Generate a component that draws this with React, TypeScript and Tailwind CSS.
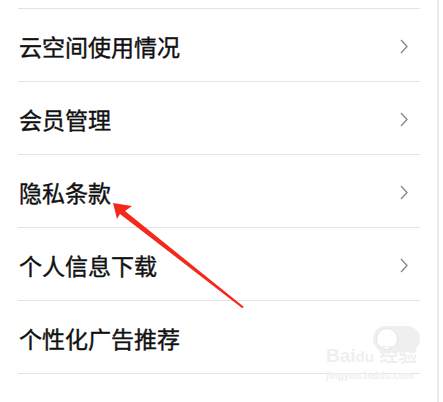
const rows = [
  { label: '云空间使用情况', kind: 'link' },
  { label: '会员管理', kind: 'link' },
  { label: '隐私条款', kind: 'link' },
  { label: '个人信息下载', kind: 'link' },
  { label: '个性化广告推荐', kind: 'toggle' },
];

const Chevron = () => (
  <svg className="mr-[12px]" width="8" height="15" viewBox="0 0 8 15" fill="none">
    <polyline points="1,1 7,7.5 1,14" stroke="#8a8a8a" strokeWidth="1.4" />
  </svg>
);

const Toggle = () => (
  <span className="relative flex h-[26px] w-[47px] items-center rounded-full bg-[#efefef]">
    <span className="ml-[3px] h-[22px] w-[22px] rounded-full border border-[#e6e6e6] bg-white" />
  </span>
);

const App = () => {
  return (
    <div
      className="relative h-[402px] w-[443px] overflow-hidden bg-white"
      style={{ fontFamily: '"Noto Sans CJK SC", "Noto Sans", sans-serif' }}
    >
      <div className="h-[402px] w-[439px] border-r-2 border-[#ebebeb]">
        <div className="h-2" />
        <ul className="ml-[18px] w-[402px] border-b border-[#e3e3e3]">
          {rows.map((row) => (
            <li
              key={row.label}
              className="flex h-[73px] items-center justify-between border-t border-[#e3e3e3] pt-[3px]"
            >
              <span className="pl-px text-[23px] font-normal leading-none text-[#111] [-webkit-text-stroke:0.4px_#111]">
                {row.label}
              </span>
              {row.kind === 'link' ? <Chevron /> : <Toggle />}
            </li>
          ))}
        </ul>
      </div>

      {/* red annotation arrow */}
      <svg className="pointer-events-none absolute left-0 top-0" width="443" height="402" viewBox="0 0 443 402">
        <polygon points="113,203 132,206 125,211 244,307 242,308 120,214 117,219" fill="#f5281c" />
      </svg>

      {/* watermark */}
      <div className="pointer-events-none absolute left-[326px] top-[346px] flex flex-col items-start text-[#efefef]">
        <span className="text-[19px] font-bold leading-none" style={{ fontFamily: '"Liberation Sans", "Noto Sans CJK SC", sans-serif' }}>
          Bai<span className="text-[15px]">du</span> 经验
        </span>
        <span className="mt-[6px] text-[10px] font-bold leading-none" style={{ fontFamily: '"Liberation Sans", sans-serif' }}>
          jingyan.baidu.com
        </span>
      </div>
    </div>
  );
};

export default App;
